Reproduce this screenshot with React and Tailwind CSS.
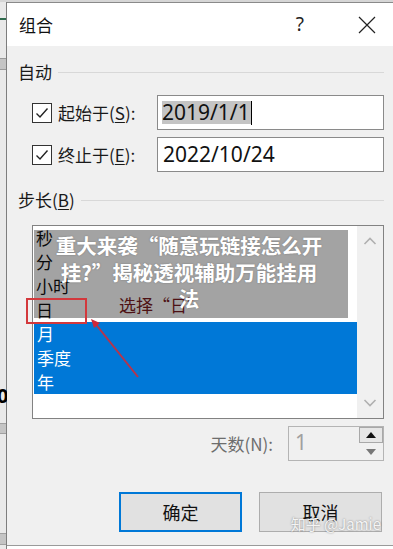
import React from 'react';

const cjk = { fontFamily: '"Noto Sans CJK SC", "Noto Sans", sans-serif' };
const latin = { fontFamily: '"Noto Sans", "Noto Sans CJK SC", sans-serif' };

function Check() {
  return (
    <div className="w-[20px] h-[20px] border border-[#333] bg-white flex items-center justify-center shrink-0">
      <svg width="16" height="16" viewBox="0 0 16 16">
        <path d="M2.5 8.5 L6 12 L13.5 3.5" fill="none" stroke="#222" strokeWidth="1.4" />
      </svg>
    </div>
  );
}

function GroupHead({ label, under }) {
  return (
    <div className="flex items-center h-[24px]">
      <span className="text-[17px] text-[#1a1a1a] leading-[24px]" style={cjk}>
        {label}
        {under && (
          <>
            (<span className="underline underline-offset-2">{under}</span>)
          </>
        )}
      </span>
      <div className="flex-1 h-px bg-[#d8d8d8] ml-[6px]" />
    </div>
  );
}

function DateRow({ label, k, value, selected }) {
  return (
    <div className="flex items-center h-[35px]">
      <div className="ml-[14px]"><Check /></div>
      <span className="ml-[6px] w-[99px] text-[17px] text-[#1a1a1a]" style={cjk}>
        {label}(<span className="underline underline-offset-2">{k}</span>):
      </span>
      <div className="flex-1 h-[35px] border border-[#8a8a8a] bg-white flex items-center pl-[4px]">
        {selected ? (
          <>
            <span className="bg-[#c4c4c4] text-[21px] leading-[23px] text-[#111] pr-[1px]" style={latin}>{value}</span>
            <span className="w-px h-[24px] bg-black" />
          </>
        ) : (
          <span className="text-[21px] leading-[23px] text-[#111] pl-[1px]" style={latin}>{value}</span>
        )}
      </div>
    </div>
  );
}

const items = ['秒', '分', '小时', '日', '月', '季度', '年'];

function ListBox() {
  return (
    <div className="relative ml-[14px] h-[194px]">
      <div className="h-full border border-[#828282] bg-white flex">
        <div className="flex-1 relative pt-0">
          {items.map((t, i) => (
            <div
              key={t}
              className={
                'h-[24px] leading-[24px] text-[17px] pl-[3px] ' +
                (i >= 4 ? 'bg-[#0078d7] text-white ml-px' : 'text-[#111]')
              }
              style={cjk}
            >
              {t}
            </div>
          ))}
          <div className="absolute left-[86px] top-[66px] text-[17px] text-[#7a1c22]" style={cjk}>
            选择“日”
          </div>
          <div
            className="absolute left-px top-[4px] w-[314px] h-[88px] bg-[rgba(0,0,0,0.36)] text-white font-bold text-[20.5px] leading-[26.5px] text-center pt-[2px] pr-[4px]"
            style={{ ...cjk, textShadow: '0 0 2px rgba(0,0,0,0.25)' }}
          >
            <div>重大来袭“随意玩链接怎么开</div>
            <div>挂?”揭秘透视辅助万能挂用</div>
            <div>法</div>
          </div>
        </div>
        <div className="w-[26px] bg-[#f0f0f0] flex flex-col justify-between items-center py-[10px]">
          <svg width="14" height="10" viewBox="0 0 14 10">
            <path d="M1.5 8 L7 2.5 L12.5 8" fill="none" stroke="#b0b0b0" strokeWidth="1.6" />
          </svg>
          <svg width="14" height="10" viewBox="0 0 14 10">
            <path d="M1.5 2 L7 7.5 L12.5 2" fill="none" stroke="#b0b0b0" strokeWidth="1.6" />
          </svg>
        </div>
      </div>
      <div className="absolute left-[-6px] top-[73px] w-[61px] h-[26px] border-2 border-[#d3383c]" />
      <svg className="absolute left-[56px] top-[93px]" width="52" height="62" viewBox="0 0 52 62">
        <path d="M50 59 L6 4" stroke="#b8344a" strokeWidth="2" fill="none" />
        <path d="M3 1 L12 5 L6 10 Z" fill="#d0283a" />
      </svg>
    </div>
  );
}

export default function App() {
  return (
    <div className="w-[393px] h-[549px] overflow-hidden bg-[#eaeaea] flex flex-col">
      <div className="h-[2px] bg-[#d6d6d6]" />
      <div className="flex flex-1">
        <div className="w-[7px] relative bg-[#e9e9e9] border-r border-[#7d7d7d]">
          <div className="absolute top-[16px] left-0 w-full h-[2px] bg-[#2f6b4e]" />
          <div className="absolute top-[56px] left-0 w-full h-[12px] bg-[#c4c4c4] border-y border-[#9a9a9a]" />
          <div className="absolute top-[379px] left-[-3px] text-[20px] font-bold text-black" style={latin}>0</div>
          <div className="absolute top-[421px] left-0 w-full h-[11px] bg-[#c4c4c4] border-y border-[#a0a0a0]" />
          <div className="absolute top-[531px] left-0 w-full h-[12px] bg-[#c4c4c4] border-y border-[#a0a0a0]" />
        </div>
        <div className="flex-1 flex flex-col">
          <div className="flex-1 flex flex-col border-t border-[#8a8a8a] border-b border-b-[#9a9a9a]">
            <div className="h-[43px] bg-white flex items-center">
              <span className="ml-[12px] text-[17px] text-[#111]" style={cjk}>组合</span>
              <span className="ml-auto text-[19px] text-[#222]" style={latin}>?</span>
              <svg className="ml-[54px] mr-[17px]" width="18" height="18" viewBox="0 0 18 18">
                <path d="M1 1 L17 17 M17 1 L1 17" stroke="#222" strokeWidth="1.2" />
              </svg>
            </div>
            <div className="flex-1 bg-[#f0f0f0] pl-[11px] pr-[9px] pt-[14px] relative">
              <GroupHead label="自动" />
              <div className="mt-[11px]">
                <DateRow label="起始于" k="S" value="2019/1/1" selected />
              </div>
              <div className="mt-[7px]">
                <DateRow label="终止于" k="E" value="2022/10/24" />
              </div>
              <div className="mt-[16px]">
                <GroupHead label="步长" under="B" />
              </div>
              <div className="mt-[13px]">
                <ListBox />
              </div>
              <div className="mt-[7px] flex items-center justify-end h-[35px]">
                <span className="text-[17px] text-[#6d6d6d]" style={cjk}>天数(N):</span>
                <div className="ml-[15px] w-[96px] h-[35px] border border-[#b4b4b4] bg-[#f0f0f0] flex">
                  <span className="flex-1 pl-[6px] text-[21px] leading-[30px] text-[#a0a0a0]" style={latin}>1</span>
                  <div className="w-[24px] flex flex-col">
                    <div className="h-[16px] bg-[#e6e6e6] border border-[#a8a8a8] flex items-center justify-center">
                      <svg width="10" height="6" viewBox="0 0 10 6"><path d="M0 6 L5 0 L10 6 Z" fill="#111" /></svg>
                    </div>
                    <div className="flex-1 bg-[#f0f0f0] flex items-center justify-center">
                      <svg width="10" height="6" viewBox="0 0 10 6"><path d="M0 0 L5 6 L10 0 Z" fill="#777" /></svg>
                    </div>
                  </div>
                </div>
              </div>
              <div className="mt-[31px] flex justify-end gap-[17px] pr-[2px]">
                <button className="w-[123px] h-[40px] border-2 border-[#0078d7] bg-[#e1e1e1] text-[18px] text-[#111]" style={cjk}>
                  确定
                </button>
                <button className="relative w-[123px] h-[40px] border border-[#adadad] bg-[#e1e1e1] text-[18px] text-[#111]" style={cjk}>
                  取消
                  <span
                    className="absolute right-[0px] bottom-[-4px] text-[15px] text-[#f4f4f4] whitespace-nowrap"
                    style={{ ...cjk, textShadow: '0 0 2px rgba(0,0,0,0.45)' }}
                  >
                    知乎 @Jamie
                  </span>
                </button>
              </div>
            </div>
          </div>
          <div className="h-[3px] bg-white" />
        </div>
      </div>
    </div>
  );
}
